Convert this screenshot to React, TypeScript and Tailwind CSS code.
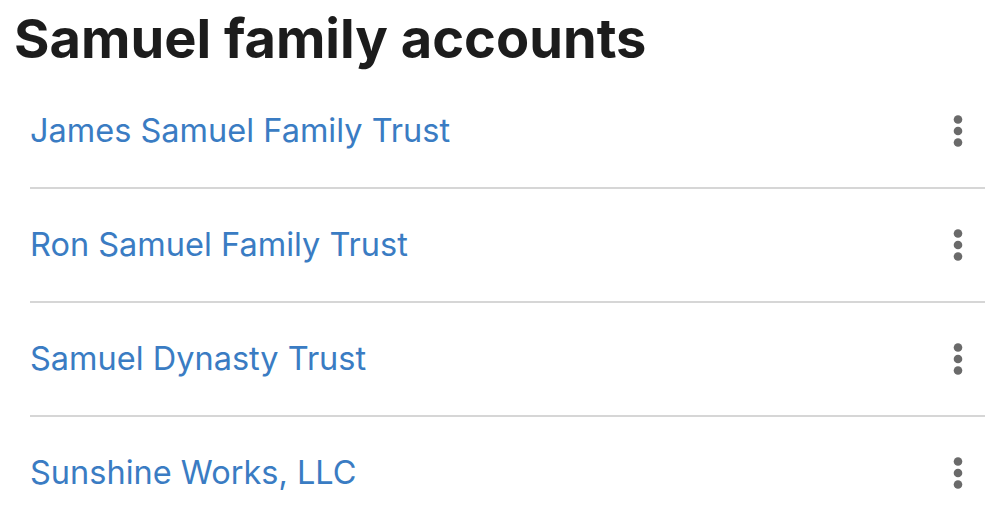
import React from "react";

const items = [
  "James Samuel Family Trust",
  "Ron Samuel Family Trust",
  "Samuel Dynasty Trust",
  "Sunshine Works, LLC",
];

function Kebab() {
  return (
    <svg width="10" height="34" viewBox="0 0 10 34" className="block">
      <circle cx="5" cy="5.5" r="4.3" fill="#6a6a6a" />
      <circle cx="5" cy="17" r="4.3" fill="#6a6a6a" />
      <circle cx="5" cy="28.5" r="4.3" fill="#6a6a6a" />
    </svg>
  );
}

export default function App() {
  return (
    <div
      className="w-[1000px] h-[519px] overflow-hidden bg-white"
      style={{ fontFamily: "Inter, 'Noto Sans', sans-serif" }}
    >
      <div className="h-[75px] pl-[14px] pt-[6px]">
        <h1 className="text-[54.2px] leading-[64px] font-bold text-[#1c1c1c]">
          Samuel family accounts
        </h1>
      </div>
      <ul className="ml-[30px] mr-[15px]">
        {items.map((t) => (
          <li
            key={t}
            className="h-[114px] border-b-2 border-[#d6d6d6] flex items-center justify-between"
          >
            <a className="text-[32.5px] leading-[40px] text-[#3a7cc3]">{t}</a>
            <span className="mr-[22px]">
              <Kebab />
            </span>
          </li>
        ))}
      </ul>
    </div>
  );
}
